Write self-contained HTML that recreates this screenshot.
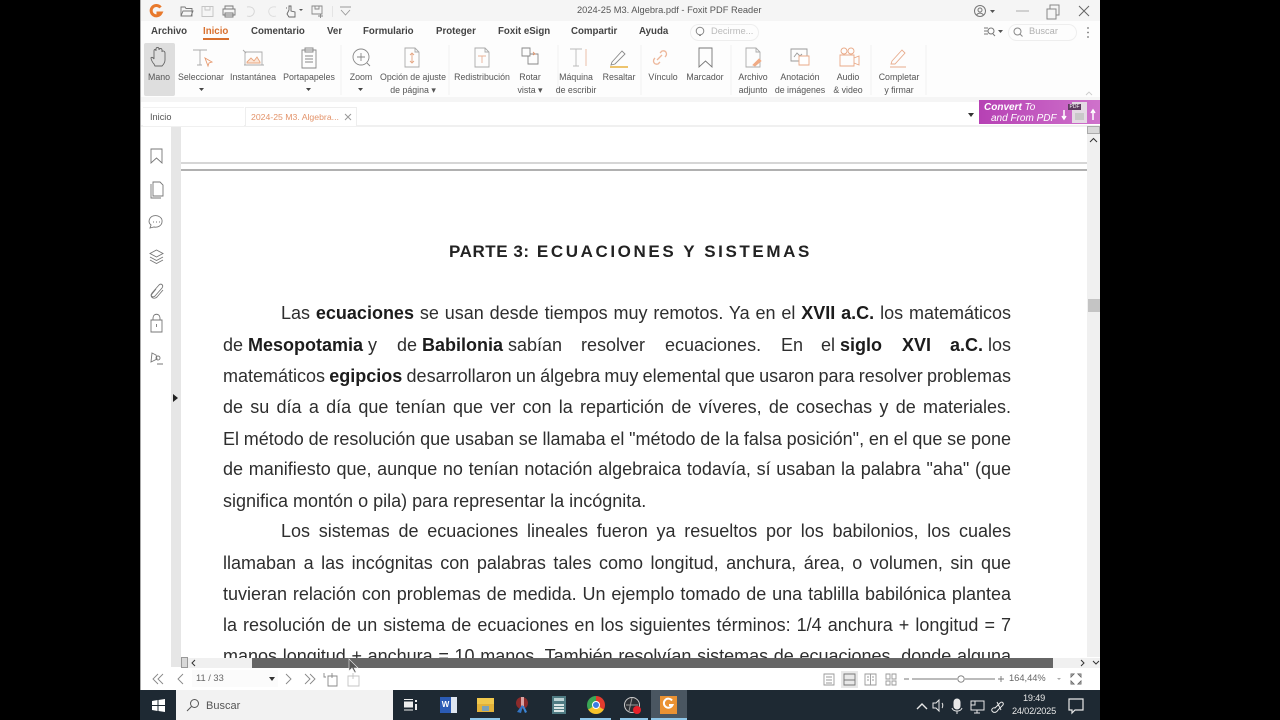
<!DOCTYPE html>
<html lang="es"><head><meta charset="utf-8">
<style>
html,body{margin:0;padding:0;background:#000;width:1280px;height:720px;overflow:hidden}
body{position:relative;font-family:"Liberation Sans",sans-serif;filter:blur(.35px)}
.a,.l,.t{position:absolute}
.t{white-space:nowrap;color:#555;font-size:8.8px;line-height:13px;text-align:center;transform:translateX(-50%)}
.m{position:absolute;top:25px;font-size:9.700px;line-height:13px;color:#444;font-weight:bold;white-space:nowrap}
.l{left:223px;width:788px;font-size:18px;line-height:20px;color:#2e2e2e;text-align:justify;text-align-last:justify;white-space:nowrap}
.l b{color:#1c1c1c}
.w{position:absolute;top:0;white-space:nowrap}
svg{position:absolute;overflow:visible;fill:none}
</style></head><body>
<div class="a" style="left:141px;top:0;width:959px;height:690px;background:#fff;overflow:hidden"></div>
<div class="a" style="left:140px;top:0;width:1px;height:690px;background:#aaa"></div>
<div class="a" style="left:141px;top:0;width:959px;height:21px;background:#f5f5f5"></div>
<div class="a" style="left:141px;top:21px;width:959px;height:76px;background:#fdfdfd"></div>
<div class="a" style="left:141px;top:97px;width:959px;height:5px;background:#f5f5f5"></div>
<div class="a" style="left:141px;top:125px;width:959px;height:2px;background:#f0f0f0"></div>

<!-- title bar -->
<svg style="left:148px;top:3px" width="16" height="16" viewBox="0 0 16 16"><path d="M12.500 4.500A5.200 5.200 0 1 0 13 10H8.500" stroke="#e8792c" stroke-width="3"/></svg>
<svg style="left:175px;top:3px" width="190" height="16" viewBox="0 0 190 16" stroke="#888" stroke-width=".9">
<path d="M6 13V4h4l1 1.500h6V13zM6 13l2-5h10l-2 5" stroke="#777"/>
<path d="M27 3.500h11v10H27zM30 3.500v3.500h5V3.500" stroke="#c4c4c4"/>
<path d="M50 6V3h8v3M48 6h12v6h-12zM50 10h8v4h-8z" stroke="#777"/>
<path d="M72 4c6-1 8 3 7 6s-4 4-7 3" stroke="#d4d4d4"/>
<path d="M101 4c-6-1-8 3-7 6s4 4 7 3" stroke="#dcdcdc"/>
<path d="M114 7V3h2v5l4 1v5h-6l-2-3zM111 5h1" stroke="#666"/>
<path d="M124 6h4l-2 2z" fill="#555" stroke="none"/>
<path d="M137 3h10v8h-10zM140 3v3h4V3M143 13h5M145.500 11v4" stroke="#888"/>
<path d="M165 4h11M166 7l4.500 5 4.500-5" stroke="#999"/>
<path d="M157.500 3v11" stroke="#e2e2e2"/>
</svg>
<div class="a" style="left:577px;top:4px;font-size:9.300px;line-height:13px;color:#555;white-space:nowrap">2024-25 M3. Algebra.pdf - Foxit PDF Reader</div>
<svg style="left:970px;top:2px" width="125" height="18" viewBox="0 0 125 18" stroke="#777">
<circle cx="10" cy="9" r="5.500"/><circle cx="10" cy="8" r="2"/><path d="M6.500 13c2-2.500 5-2.500 7 0"/>
<path d="M20 8h5l-2.500 3z" fill="#555" stroke="none"/>
<path d="M46 9h13" stroke="#aaa"/>
<path d="M77 7h9v10h-9zM80 7V3h9v10h-3" stroke="#888"/>
<path d="M109 4l10 10M119 4l-10 10" stroke="#666"/>
</svg>

<!-- menu -->
<div class="m" style="left:151px">Archivo</div>
<div class="m" style="left:203px;color:#d9702e">Inicio</div>
<div class="a" style="left:203px;top:38px;width:26px;height:1.500px;background:#d9702e"></div>
<div class="m" style="left:251px">Comentario</div>
<div class="m" style="left:327px">Ver</div>
<div class="m" style="left:363px">Formulario</div>
<div class="m" style="left:436px">Proteger</div>
<div class="m" style="left:498px">Foxit eSign</div>
<div class="m" style="left:571px">Compartir</div>
<div class="m" style="left:639px">Ayuda</div>
<div class="a" style="left:690px;top:24px;width:67px;height:15px;border:1px solid #eee;border-radius:9px"></div>
<svg style="left:694px;top:26px" width="12" height="12" viewBox="0 0 12 12" stroke="#888"><circle cx="6" cy="5" r="3.800"/><path d="M5 9.500h2"/></svg>
<div class="a" style="left:711px;top:25px;font-size:9.300px;line-height:13px;color:#bbb">Decirme...</div>
<svg style="left:983px;top:25px" width="22" height="14" viewBox="0 0 22 14" stroke="#777"><path d="M1 3h4M1 6h4M1 9h4"/><circle cx="8" cy="6" r="3"/><path d="M10 9l2 2"/><path d="M15 5h5l-2.500 3z" fill="#555" stroke="none"/></svg>
<div class="a" style="left:1008px;top:24px;width:67px;height:15px;border:1px solid #eee;border-radius:9px"></div>
<svg style="left:1012px;top:26px" width="12" height="12" viewBox="0 0 12 12" stroke="#888"><circle cx="5.500" cy="5.500" r="3.500"/><path d="M8 8l2.500 2.500"/></svg>
<div class="a" style="left:1029px;top:25px;font-size:9.300px;line-height:13px;color:#b0b0b0">Buscar</div>
<svg style="left:1086px;top:26px" width="4" height="13"><circle cx="2" cy="2" r=".9" fill="#777"/><circle cx="2" cy="6.500" r=".9" fill="#777"/><circle cx="2" cy="11" r=".9" fill="#777"/></svg>

<!-- ribbon -->
<div class="a" style="left:144px;top:43px;width:31px;height:53px;background:#dedede;border-radius:2px"></div>
<svg style="left:141px;top:43px" width="960" height="54" viewBox="141 43 960 54" stroke="#999" stroke-width=".9">
<path d="M154 64c-2-2-3-5-3-6 0-1 2-1 3 1v-8c0-2 2-2 2 0v-2c0-2 3-2 3 0v1c0-2 3-2 3 0v2c0-2 3-1 3 1v7c0 3-2 5-3 6h-7z" stroke="#666"/>
<path d="M193 50h14M200 50v15M197 65h5" stroke="#aaa"/><path d="M205 58l7 4-3 1-1 3z" stroke="#e79a70"/>
<path d="M245 52h17v13h-17zM243 50l3 3M244 65h20" stroke="#aaa"/><path d="M247 62l4-4 3 3 3-4 3 5v1h-13z" fill="#fbe6d8" stroke="#e8a57e"/>
<path d="M302 50h14v18h-14zM305 48h8v4h-8zM305 56h8M305 59h8M305 62h8" stroke="#888"/>
<circle cx="361" cy="57" r="8" stroke="#888"/><path d="M367 63l3 3M357 57h8M361 53v8" stroke="#888"/>
<path d="M405 48h10l4 4v15h-14zM415 48v4h4" stroke="#aaa"/><path d="M412 53v10M410 55l2-2 2 2M410 61l2 2 2-2" stroke="#e5a582"/>
<path d="M475 48h10l4 4v15h-14zM485 48v4h4" stroke="#aaa"/><path d="M478 56h8M482 56v7" stroke="#e9b298"/>
<path d="M522 48h8v8h-8zM530 54h8v10h-10v-8" stroke="#888"/><path d="M533 52l2 2-2 1" stroke="#e5956a"/>
<path d="M570 49h12M576 49v17M573 66h6" stroke="#bbb"/><path d="M586 49v17" stroke="#e9b8a0"/>
<path d="M612 62l10-11 3 3-10 10-4 1z" stroke="#888"/><path d="M610 67h18" stroke="#e8b13f" stroke-width="1.500"/>
<path d="M657 60l5-5M655 58c-3 3-1 7 3 6l2-2M665 57c3-3 1-7-3-6l-2 2" stroke="#edb79b" stroke-width="1.300"/>
<path d="M699 48h13v19l-6.500-6-6.500 6z" stroke="#777"/>
<path d="M746 48h10l4 4v15h-14zM756 48v4h4" stroke="#aaa"/><path d="M753 65l6-6 2 2-6 5z" fill="#f0ab85" stroke="#f0ab85"/>
<path d="M791 49h16v12h-16zM794 57l3-4 3 3 2-2" stroke="#999"/><path d="M799 56h10v9h-10z" fill="#fff" stroke="#e9a987"/>
<path d="M840 55h14v11h-14zM854 58l5-2v9l-5-2" stroke="#e9a987"/><circle cx="844" cy="51" r="3" stroke="#e9a987"/><circle cx="851" cy="51" r="3" stroke="#e9a987"/>
<path d="M892 61l10-11 3 3-10 11h-4zM890 67h16" stroke="#e8ab8c"/>
<path d="M341 45v50M449 45v50M558 45v50M641 45v50M731 45v50M871 45v50M926 45v50" stroke="#f0f0f0"/>
<path d="M1086 95l3-3 3 3" stroke="#ccc"/>
</svg>
<div class="t" style="left:159px;top:71px">Mano</div>
<div class="t" style="left:201px;top:71px">Seleccionar</div>
<div class="t" style="left:253px;top:71px">Instantánea</div>
<div class="t" style="left:309px;top:71px">Portapapeles</div>
<div class="t" style="left:361px;top:71px">Zoom</div>
<div class="t" style="left:413px;top:71px">Opción de ajuste<br>de página ▾</div>
<div class="t" style="left:482px;top:71px">Redistribución</div>
<div class="t" style="left:530px;top:71px">Rotar<br>vista ▾</div>
<div class="t" style="left:576px;top:71px">Máquina<br>de escribir</div>
<div class="t" style="left:619px;top:71px">Resaltar</div>
<div class="t" style="left:663px;top:71px">Vínculo</div>
<div class="t" style="left:705px;top:71px">Marcador</div>
<div class="t" style="left:753px;top:71px">Archivo<br>adjunto</div>
<div class="t" style="left:800px;top:71px">Anotación<br>de imágenes</div>
<div class="t" style="left:848px;top:71px">Audio<br>&amp; video</div>
<div class="t" style="left:899px;top:71px">Completar<br>y firmar</div>
<svg style="left:141px;top:84px" width="230" height="10"><path d="M58 3h5l-2.500 3zM165 3h5l-2.500 3zM217 3h5l-2.500 3z" fill="#444" transform="translate(0 1)"/></svg>

<!-- tabs -->
<div class="a" style="left:143px;top:107px;width:101px;height:19px;background:#fff;border-top:1px solid #f2f2f2;box-sizing:border-box"></div>
<div class="a" style="left:150px;top:111px;font-size:9.200px;line-height:13px;color:#555">Inicio</div>
<div class="a" style="left:245px;top:107px;width:112px;height:19px;background:#fff;border:1px solid #eee;border-bottom:0;box-sizing:border-box"></div>
<div class="a" style="left:251px;top:111px;font-size:8.700px;line-height:13px;color:#e3936a;white-space:nowrap">2024-25 M3. Algebra...</div>
<svg style="left:344px;top:113px" width="9" height="9" stroke="#999"><path d="M1 1l6 6M7 1l-6 6"/></svg>
<svg style="left:967px;top:112px" width="8" height="6"><path d="M1 1h6l-3 4z" fill="#333"/></svg>
<div class="a" style="left:979px;top:100px;width:121px;height:24px;background:linear-gradient(90deg,#b641b4,#cf72cb)"></div>
<div class="a" style="left:984px;top:103px;font-size:10px;line-height:10.500px;color:#fff;font-style:italic;white-space:nowrap"><b>Convert</b> To<br><span style="margin-left:7px">and From PDF</span></div>
<div class="a" style="left:1072px;top:102px;width:15px;height:21px;background:#e4dae4"></div>
<div class="a" style="left:1068px;top:104px;width:13px;height:6px;background:#5d3a5d;color:#fff;font-size:5px;line-height:6px;text-align:center">PDF</div>
<div class="a" style="left:1075px;top:113px;width:9px;height:7px;background:#c9c9c9"></div>
<svg style="left:1060px;top:108px" width="40" height="14" stroke="#fff" stroke-width="1.500"><path d="M4 2v8M2 8l2 3 2-3"/><path d="M33 12V3M31 5l2-3 2 3"/></svg>

<!-- left panel -->
<div class="a" style="left:171px;top:127px;width:10px;height:540px;background:#e6e6e6"></div>
<svg style="left:141px;top:140px" width="30" height="235" viewBox="0 0 30 235" stroke="#777" stroke-width=".9">
<path d="M10 9h11v14l-5.500-5-5.500 5z"/>
<path d="M12 42h7l3 3v11h-10zM10 44v14h10"/>
<path d="M21 82a6.500 5.500 0 1 0-11 3l-1 3 4-1a6.500 5.500 0 0 0 8-5zM12 82h1M15 82h1M18 82h1"/>
<path d="M15.500 110l6.500 3.500-6.500 3.500-6.500-3.500zM9 117l6.500 3.500 6.500-3.500M9 120l6.500 3.500 6.500-3.500"/>
<path d="M15 149l-4 5c-2 2 1 4 3 2l7-8c2-3-1-5-3-3l-7 8c-3 4 2 7 5 4l6-7"/>
<path d="M10 180h11v12h-11zM12 180v-2c0-5 7-5 7 0v2M15.500 184v3"/>
<path d="M11 213l4 2 1 4-6 3zM16 224h6"/><circle cx="17" cy="218" r="2"/>
</svg>
<svg style="left:172px;top:394px" width="7" height="8"><path d="M1 0l5 4-5 4z" fill="#222"/></svg>

<!-- page -->
<div class="a" style="left:181px;top:162px;width:906px;height:2px;background:#d6d6d6"></div>
<div class="a" style="left:181px;top:169px;width:906px;height:1.500px;background:#b0b0b0"></div>
<div class="a" style="left:449px;top:241.500px;font-size:17px;line-height:20px;font-weight:bold;color:#222;white-space:nowrap"><span style="letter-spacing:.55px">PARTE 3:</span><span style="letter-spacing:2.600px"> ECUACIONES Y SISTEMAS</span></div>

<div class="l" style="top:303px;padding-left:58px;width:730px">Las <b>ecuaciones</b> se usan desde tiempos muy remotos. Ya en el <b>XVII a.C.</b> los matemáticos</div>
<div class="l" style="top:335px;left:0;width:0;text-align-last:left"><span class="w" style="left:223px">de</span><b class="w" style="left:248px">Mesopotamia</b><span class="w" style="left:368px">y</span><span class="w" style="left:397px">de</span><b class="w" style="left:422px">Babilonia</b><span class="w" style="left:508px">sabían</span><span class="w" style="left:581px">resolver</span><span class="w" style="left:665px">ecuaciones.</span><span class="w" style="left:781px">En</span><span class="w" style="left:821px">el</span><b class="w" style="left:840px">siglo</b><b class="w" style="left:902px">XVI</b><b class="w" style="left:950px">a.C.</b><span class="w" style="left:988px">los</span></div>
<div class="l" style="top:366px;word-spacing:-1.200px">matemáticos <b>egipcios</b> desarrollaron un álgebra muy elemental que usaron para resolver problemas</div>
<div class="l" style="top:397px">de su día a día que tenían que ver con la repartición de víveres, de cosechas y de materiales.</div>
<div class="l" style="top:428.500px;word-spacing:-.6px">El método de resolución que usaban se llamaba el "método de la falsa posición", en el que se pone</div>
<div class="l" style="top:459px">de manifiesto que, aunque no tenían notación algebraica todavía, sí usaban la palabra "aha" (que</div>
<div class="l" style="top:491px;text-align-last:left">significa montón o pila) para representar la incógnita.</div>
<div class="l" style="top:521px;padding-left:58px;width:730px">Los sistemas de ecuaciones lineales fueron ya resueltos por los babilonios, los cuales</div>
<div class="l" style="top:553px">llamaban a las incógnitas con palabras tales como longitud, anchura, área, o volumen, sin que</div>
<div class="l" style="top:584px">tuvieran relación con problemas de medida. Un ejemplo tomado de una tablilla babilónica plantea</div>
<div class="l" style="top:615px">la resolución de un sistema de ecuaciones en los siguientes términos: 1/4 anchura + longitud = 7</div>
<div class="a" style="left:181px;top:640px;width:906px;height:18px;overflow:hidden"><div class="l" style="top:6px;left:42px">manos longitud + anchura = 10 manos. También resolvían sistemas de ecuaciones, donde alguna</div></div>

<!-- scrollbars -->
<div class="a" style="left:1087px;top:126px;width:13px;height:531px;background:#f0f0f0"></div>
<div class="a" style="left:1087px;top:126px;width:13px;height:8px;background:#d8d8d8;border:1px solid #aaa;box-sizing:border-box"></div>
<svg style="left:1089px;top:137px" width="9" height="7" stroke="#333"><path d="M1 5l3.500-3.500L8 5"/></svg>
<div class="a" style="left:1088px;top:299px;width:12px;height:13px;background:#c4c4c4"></div>
<div class="a" style="left:181px;top:658px;width:919px;height:10px;background:#f0f0f0"></div>
<div class="a" style="left:252px;top:658px;width:801px;height:10px;background:#666"></div>
<div class="a" style="left:181px;top:657px;width:7px;height:11px;background:#d8d8d8;border:1px solid #999;box-sizing:border-box"></div>
<svg style="left:190px;top:659px" width="8" height="8" stroke="#333"><path d="M5 1L2 4l3 3"/></svg>
<svg style="left:1078px;top:659px" width="22" height="8" stroke="#333"><path d="M3 1l3 3-3 3M15 2l3 3 3-3"/></svg>

<!-- status bar -->
<div class="a" style="left:141px;top:668px;width:959px;height:22px;background:#fff"></div>
<svg style="left:348px;top:659px" width="10" height="16"><path d="M1 0v12l3-3 3 5 1-1-2-4h4z" fill="#555" stroke="#eee" stroke-width=".6"/></svg>
<svg style="left:150px;top:671px" width="215" height="16" viewBox="0 0 215 16" stroke="#888" stroke-width=".9">
<path d="M8 3L3 8l5 5M13 3L8 8l5 5M33 3l-5 5 5 5"/>
<path d="M136 3l5 5-5 5M155 3l5 5-5 5M160 3l5 5-5 5"/>
<path d="M176 6h-2v-4M178 5h9v10h-9zM182 2v5"/>
<path d="M198 5h11v10h-11zM203 2v6" stroke="#c4c4c4"/>
</svg>
<div class="a" style="left:192px;top:670px;width:86px;height:17px;background:#fbfbfb"></div>
<div class="a" style="left:196px;top:672px;font-size:9.300px;line-height:13px;color:#666">11 / 33</div>
<svg style="left:269px;top:677px" width="7" height="5"><path d="M0 0h6l-3 4z" fill="#333"/></svg>
<div class="a" style="left:841px;top:671px;width:17px;height:17px;background:#e8e8e8"></div>
<svg style="left:820px;top:670px" width="270" height="18" viewBox="820 670 270 18" stroke="#999" stroke-width=".9">
<path d="M824 674h10v11h-10zM826 677h6M826 680h6M826 683h6"/>
<path d="M844 674h11v11h-11zM844 680h11" stroke="#777"/>
<path d="M865 674h11v11h-11zM870.500 674v11M867 677h2M867 680h2M872 677h2M872 680h2"/>
<path d="M886 674h4v5h-4zM892 674h4v5h-4zM886 681h4v4h-4zM892 681h4v4h-4z"/>
<path d="M904 679h5M912 679h45M965 679h30M998 679h6M1001 676v6" stroke="#777"/>
<circle cx="961" cy="679" r="3.200" fill="#fff" stroke="#777"/>
<path d="M1071 674h3l-3 3zM1081 674h-3l3 3zM1071 684h3l-3-3zM1081 684h-3l3-3z" stroke="#666"/>
<path d="M1057 678h4l-2 2z" fill="#aaa" stroke="none"/>
</svg>
<div class="a" style="left:1009px;top:672px;font-size:9.300px;line-height:13px;color:#666">164,44%</div>

<!-- taskbar -->
<div class="a" style="left:140px;top:690px;width:960px;height:30px;background:#1e2933"></div>
<div class="a" style="left:176px;top:690px;width:217px;height:30px;background:#f2f2f2"></div>
<svg style="left:152px;top:699px" width="13" height="13"><path d="M0 2l5.500-1v5H0zM6.500 1L13 0v6H6.500zM0 7h5.500v5L0 11zM6.500 7H13v6l-6.500-1z" fill="#fff"/></svg>
<svg style="left:186px;top:698px" width="14" height="14" stroke="#555"><circle cx="8.500" cy="5.500" r="4"/><path d="M5.500 8.500L1 13"/></svg>
<div class="a" style="left:206px;top:699px;font-size:11px;line-height:14px;color:#555">Buscar</div>
<svg style="left:404px;top:699px" width="13" height="12"><path d="M0 .5h9M0 11h9" stroke="#eee"/><rect x="0" y="2.500" width="9" height="6" fill="#eee"/><rect x="11" y="1" width="2" height="2" fill="#eee"/><rect x="11" y="5" width="2" height="6" fill="#eee"/></svg>
<div class="a" style="left:446px;top:697px;width:11px;height:16px;background:#dfe6f0"></div>
<div class="a" style="left:440px;top:697px;width:11px;height:16px;background:#2b5bb5;color:#fff;font-size:8px;line-height:16px;font-weight:bold;text-align:center">W</div>
<div class="a" style="left:477px;top:698px;width:17px;height:14px;background:#f1c84d"></div>
<div class="a" style="left:477px;top:704px;width:17px;height:8px;background:#e3b23a"></div>
<div class="a" style="left:482px;top:706px;width:7px;height:5px;background:#7da2b8"></div>
<svg style="left:514px;top:696px" width="18" height="19"><circle cx="8" cy="7" r="6" fill="#8c2b2b"/><path d="M7 1h3v10H7z" fill="#d9a3a3"/><path d="M3 16l5-7 1 1-2 7z" fill="#3375c4"/><path d="M8 10l3 7 2-1-3-6z" fill="#3c86d6"/></svg>
<div class="a" style="left:552px;top:696px;width:14px;height:18px;background:#4f7b83"></div>
<div class="a" style="left:554px;top:698px;width:10px;height:3px;background:#bcd4d6"></div>
<div class="a" style="left:554px;top:703px;width:10px;height:9px;background:repeating-linear-gradient(0deg,#dbe6e6 0 2px,#4f7b83 2px 3px)"></div>
<div class="a" style="left:587px;top:696px;width:18px;height:18px;border-radius:50%;background:conic-gradient(#e33b2e 0 120deg,#f7c32b 120deg 240deg,#3aa655 240deg 360deg)"></div>
<div class="a" style="left:592px;top:701px;width:8px;height:8px;border-radius:50%;background:#3b7de2;border:1px solid #fff;box-sizing:border-box"></div>
<svg style="left:623px;top:696px" width="20" height="20"><circle cx="9" cy="9" r="7.500" stroke="#ccc" fill="#2a2e33"/><path d="M3 9h12M9 2l-3 13" stroke="#999"/><circle cx="14" cy="14" r="4" fill="#e8212a"/></svg>
<div class="a" style="left:651px;top:690px;width:36px;height:30px;background:#4a5661"></div>
<div class="a" style="left:660px;top:696px;width:17px;height:18px;background:#ea9233"></div>
<svg style="left:662px;top:697px" width="13" height="13"><path d="M10 3.500A4.500 4.500 0 1 0 10.500 8H7" stroke="#fff" stroke-width="2"/></svg>
<div class="a" style="left:470px;top:718px;width:30px;height:2px;background:#8fc6e8"></div>
<div class="a" style="left:580px;top:718px;width:31px;height:2px;background:#8fc6e8"></div>
<div class="a" style="left:620px;top:718px;width:28px;height:2px;background:#8fc6e8"></div>
<div class="a" style="left:651px;top:718px;width:36px;height:2px;background:#8fc6e8"></div>
<svg style="left:915px;top:697px" width="170" height="18" viewBox="915 697 170 18" stroke="#e8e8e8">
<path d="M917 709l5-5 5 5" stroke-width="1.400"/>
<path d="M933 703h3l3-3v11l-3-3h-3zM942 703c1 1 1 4 0 5"/>
<rect x="954" y="699" width="6" height="10" rx="3" fill="#e8e8e8"/><path d="M952 708c1 4 9 4 10 0M957 711v3"/>
<path d="M971 701h13v9h-13zM977 710v3M974 713h6M971 701h4v4h-4z"/>
<path d="M993 712c-3-2 0-5 2-4l5-5c2-2 4 0 3 2l-5 5c-1 2-3 3-5 2zM997 702l4 8"/>
<path d="M1069 699h14v11h-8l-3 3v-3h-3z" stroke-width="1.200"/>
</svg>
<div class="a" style="left:1005px;top:692px;width:58px;text-align:center;color:#e6e6e6;font-size:9.200px;line-height:13px;letter-spacing:-.2px">19:49<br>24/02/2025</div>
</body></html>
